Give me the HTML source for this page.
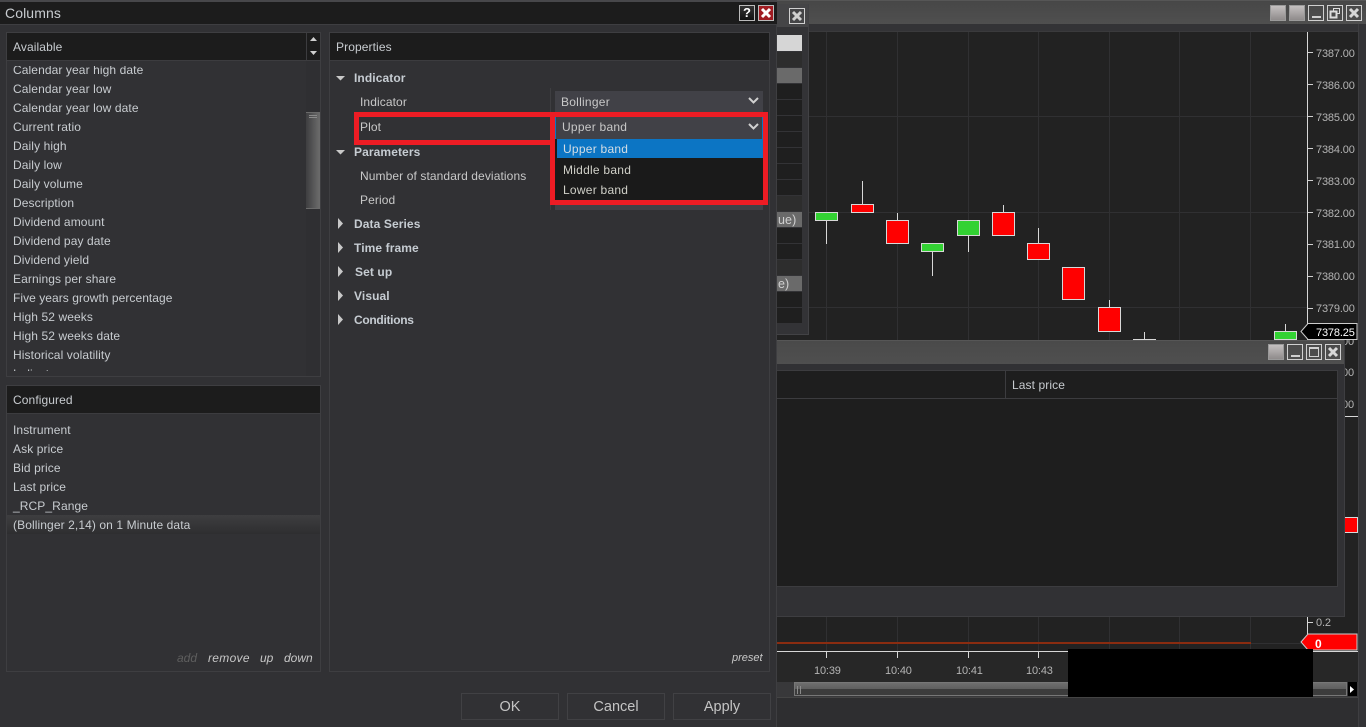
<!DOCTYPE html>
<html><head><meta charset="utf-8"><title>Columns</title>
<style>
html,body{margin:0;padding:0;background:#2e2e30}
#p{position:relative;width:1366px;height:727px;overflow:hidden;background:#2e2e30;font:12px "Liberation Sans",sans-serif;color:#c8c8c8}
#p div,#p svg{position:absolute}
.t{white-space:nowrap;line-height:16px;letter-spacing:.1px}
.b{font-weight:bold;color:#c6ccd2}
.h{background:#1c1c1c;border-bottom:1px solid #3c3c3f}
.pn{background:#313134;border:1px solid #3e3e41;box-sizing:border-box}
.gv{width:1px;background:#303032}
.gh{height:1px;background:#303032}
.c{box-sizing:border-box;border:1px solid #d8d8d8}
.w{width:1px;background:#d8d8d8}
.r{background:#f00}.n{background:#33d233}
.a{color:#b4b4b4;line-height:14px;white-space:nowrap;font-size:11px;letter-spacing:-.15px}
.k{height:1px;width:5px;background:#d0d0d0;left:1308px}
.row{left:777px;width:25px;height:15px;background:#1f1f1f;box-sizing:border-box}
.bt{box-sizing:border-box;width:16px;height:16px;border:1px solid #d0d0d0}
.gb{box-sizing:border-box;width:16px;height:16px;background:linear-gradient(#c4c0c0,#8f8b8b);border:1px solid #9a9a9a}
.btn{box-sizing:border-box;height:27px;width:98px;border:1px solid #414144;text-align:center;line-height:27px;font-size:14.5px;color:#c4c4c4;top:693px}
.i{font-style:italic;font-size:12px;line-height:14px}
.s{letter-spacing:.25px}
</style></head><body><div id="p">

<!-- background chart window -->
<div style="left:777px;top:0;width:589px;height:24px;background:linear-gradient(#474747,#4f4f4f);border-top:1px solid #565656;box-sizing:border-box"></div>
<div style="left:777px;top:24px;width:589px;height:7px;background:#333336"></div>
<div style="left:777px;top:31px;width:581px;height:620px;background:#222;border-top:1px solid #3a3a3c;box-sizing:border-box"></div>
<div style="left:777px;top:652px;width:581px;height:30px;background:#272727"></div>
<div style="left:1358px;top:24px;width:8px;height:703px;background:#333336;border-left:1px solid #3e3e41;box-sizing:border-box"></div>

<div class="gb" style="left:1270px;top:5px"></div><div class="gb" style="left:1289px;top:5px"></div>
<div class="bt" style="left:1308px;top:5px"><div style="left:3px;top:10px;width:9px;height:2px;background:#d0d0d0"></div></div>
<div class="bt" style="left:1327px;top:5px"><svg width="14" height="14" style="left:0;top:0"><rect x="5.500" y="2.500" width="6" height="5" fill="none" stroke="#ddd"/><rect x="2.500" y="5.500" width="6" height="6" fill="#4c4c4c" stroke="#ddd" stroke-width="2"/></svg></div>
<div class="bt" style="left:1346px;top:5px"><svg width="14" height="14" style="left:0;top:0"><path d="M3 3L11 11M11 3L3 11" stroke="#d8d8d8" stroke-width="3"/></svg></div>

<!-- grid -->
<div class="gv" style="left:826px;top:32px;height:619px"></div>
<div class="gv" style="left:897px;top:32px;height:619px"></div>
<div class="gv" style="left:968px;top:32px;height:619px"></div>
<div class="gv" style="left:1038px;top:32px;height:619px"></div>
<div class="gv" style="left:1109px;top:32px;height:619px"></div>
<div class="gv" style="left:1179px;top:32px;height:619px"></div>
<div class="gv" style="left:1250px;top:32px;height:619px"></div>
<div class="gh" style="left:809px;top:116px;width:498px"></div>
<div class="gh" style="left:809px;top:212px;width:498px"></div>
<div class="gh" style="left:809px;top:307px;width:498px"></div>

<!-- small window behind -->
<div style="left:777px;top:4px;width:32px;height:331px;background:#333336;border-right:1px solid #424245;border-bottom:1px solid #424245;box-sizing:border-box"></div>
<div style="left:777px;top:4px;width:31px;height:23px;background:#454547"></div>
<div class="bt" style="left:789px;top:8px"><svg width="14" height="14" style="left:0;top:0"><path d="M3 3L11 11M11 3L3 11" stroke="#d0d0d0" stroke-width="3"/></svg></div>
<div class="row" style="top:35px;height:16px;background:#d6d6d6"></div>
<div class="row" style="top:52px;background:#2d2d2d"></div>
<div class="row" style="top:68px;background:#6a6a6a"></div>
<div class="row" style="top:84px"></div><div class="row" style="top:100px"></div><div class="row" style="top:116px"></div><div class="row" style="top:132px"></div><div class="row" style="top:148px"></div><div class="row" style="top:164px"></div><div class="row" style="top:180px"></div>
<div class="row" style="top:196px;background:#2d2d2d"></div>
<div class="row" style="top:212px;background:#6a6a6a"></div>
<div class="row" style="top:228px"></div><div class="row" style="top:244px"></div>
<div class="row" style="top:260px;background:#2d2d2d"></div>
<div class="row" style="top:276px;background:#6a6a6a"></div>
<div class="row" style="top:292px"></div><div class="row" style="top:308px"></div>
<div class="t" style="left:778px;top:212px;color:#d0d0d0;font-size:12.500px">ue)</div>
<div class="t" style="left:778px;top:276px;color:#d0d0d0;font-size:12.500px">e)</div>

<!-- axis -->
<div style="left:1307px;top:32px;width:1px;height:310px;background:#d8d8d8"></div>
<div class="k" style="top:52px"></div><div class="k" style="top:84px"></div><div class="k" style="top:116px"></div><div class="k" style="top:148px"></div><div class="k" style="top:180px"></div><div class="k" style="top:212px"></div><div class="k" style="top:244px"></div><div class="k" style="top:276px"></div><div class="k" style="top:308px"></div>
<div class="a" style="left:1316px;top:47px">7387.00</div>
<div class="a" style="left:1316px;top:79px">7386.00</div>
<div class="a" style="left:1316px;top:111px">7385.00</div>
<div class="a" style="left:1316px;top:143px">7384.00</div>
<div class="a" style="left:1316px;top:175px">7383.00</div>
<div class="a" style="left:1316px;top:207px">7382.00</div>
<div class="a" style="left:1316px;top:238px">7381.00</div>
<div class="a" style="left:1316px;top:270px">7380.00</div>
<div class="a" style="left:1316px;top:302px">7379.00</div>
<div class="a" style="left:1342px;top:335px">00</div>
<div class="a" style="left:1342px;top:366px">00</div>
<div class="a" style="left:1342px;top:398px">00</div>
<div style="left:1345px;top:416px;width:13px;height:1px;background:#d8d8d8"></div>

<!-- candles -->
<div class="w" style="left:826px;top:220px;height:24px"></div><div class="c n" style="left:815px;top:212px;width:23px;height:9px"></div>
<div class="w" style="left:862px;top:181px;height:24px"></div><div class="c r" style="left:851px;top:204px;width:23px;height:9px"></div>
<div class="w" style="left:897px;top:213px;height:8px"></div><div class="c r" style="left:886px;top:220px;width:23px;height:24px"></div>
<div class="w" style="left:932px;top:251px;height:25px"></div><div class="c n" style="left:921px;top:243px;width:23px;height:9px"></div>
<div class="w" style="left:968px;top:235px;height:17px"></div><div class="c n" style="left:957px;top:220px;width:23px;height:16px"></div>
<div class="w" style="left:1003px;top:205px;height:8px"></div><div class="c r" style="left:992px;top:212px;width:23px;height:24px"></div>
<div class="w" style="left:1038px;top:228px;height:16px"></div><div class="c r" style="left:1027px;top:243px;width:23px;height:17px"></div>
<div class="c r" style="left:1062px;top:267px;width:23px;height:33px"></div>
<div class="w" style="left:1109px;top:300px;height:8px"></div><div class="c r" style="left:1098px;top:307px;width:23px;height:25px"></div>
<div class="w" style="left:1144px;top:332px;height:8px"></div><div style="left:1133px;top:339px;width:23px;height:1px;background:#d8d8d8"></div>
<div class="w" style="left:1285px;top:324px;height:8px"></div><div class="c n" style="left:1274px;top:331px;width:23px;height:9px"></div>

<!-- price tag -->
<svg width="60" height="18" style="left:1300px;top:323px"><path d="M1 8.500L8 .5H57V16.500H8Z" fill="#000" stroke="#ccc"/></svg>
<div style="left:1316px;top:326px;color:#fff;line-height:14px;font-size:11px;letter-spacing:-.15px">7378.25</div>

<!-- lower chart bits -->
<div class="c r" style="left:1335px;top:517px;width:23px;height:16px"></div>
<div style="left:1307px;top:617px;width:1px;height:17px;background:#d8d8d8"></div>
<div class="k" style="top:622px"></div>
<div class="a" style="left:1316px;top:616px">0.2</div>
<div style="left:777px;top:642px;width:474px;height:2px;background:#8a2c10"></div>
<div style="left:1251px;top:643px;width:50px;height:1px;background:#303032"></div>
<svg width="60" height="18" style="left:1300px;top:633px"><path d="M1 9L8 1H57V17H8Z" fill="#f00" stroke="#ccc"/></svg>
<div style="left:1315px;top:637px;color:#fff;font-weight:bold;line-height:14px">0</div>
<div style="left:777px;top:651px;width:581px;height:1px;background:#d8d8d8"></div>
<div class="w" style="left:826px;top:652px;height:6px"></div><div class="w" style="left:897px;top:652px;height:6px"></div><div class="w" style="left:968px;top:652px;height:6px"></div><div class="w" style="left:1038px;top:652px;height:6px"></div>
<div class="a" style="left:814px;top:664px">10:39</div>
<div class="a" style="left:885px;top:664px">10:40</div>
<div class="a" style="left:956px;top:664px">10:41</div>
<div class="a" style="left:1026px;top:664px">10:43</div>
<div style="left:777px;top:682px;width:581px;height:15px;background:#38383a;border-bottom:1px solid #444"></div>
<div style="left:794px;top:682px;width:553px;height:14px;box-sizing:border-box;border:1px solid #777;background:linear-gradient(#6e6e6e,#5e5e5e 50%,#3c3c3c 50%,#3c3c3c)"></div>
<div style="left:797px;top:686px;width:1px;height:8px;background:#8a8a8a"></div><div style="left:800px;top:686px;width:1px;height:8px;background:#8a8a8a"></div>
<div style="left:1348px;top:682px;width:9px;height:14px;background:#000"></div>
<svg width="5" height="7" style="left:1350px;top:686px"><path d="M0 0L4 3.500L0 7Z" fill="#fff"/></svg>
<div style="left:1068px;top:649px;width:245px;height:48px;background:#000"></div>

<!-- bottom window -->
<div style="left:777px;top:340px;width:568px;height:277px;background:#313134;border-right:1px solid #3e3e41;border-bottom:1px solid #3e3e41;box-sizing:border-box"></div>
<div style="left:777px;top:340px;width:567px;height:24px;background:linear-gradient(#4a4a4a,#4f4f4f);border-top:1px solid #565656;box-sizing:border-box"></div>
<div class="gb" style="left:1268px;top:344px"></div>
<div class="bt" style="left:1287px;top:344px"><div style="left:3px;top:10px;width:9px;height:2px;background:#d0d0d0"></div></div>
<div class="bt" style="left:1306px;top:344px"><div style="left:2px;top:2px;width:10px;height:10px;box-sizing:border-box;border:1px solid #d0d0d0;border-top-width:2px"></div></div>
<div class="bt" style="left:1325px;top:344px"><svg width="14" height="14" style="left:0;top:0"><path d="M3 3L11 11M11 3L3 11" stroke="#d8d8d8" stroke-width="3"/></svg></div>
<div style="left:777px;top:370px;width:561px;height:217px;background:#1e1e1e;border:1px solid #3c3c3f;border-left:0;box-sizing:border-box"></div>
<div style="left:777px;top:398px;width:560px;height:1px;background:#3c3c3f"></div>
<div style="left:1005px;top:371px;width:1px;height:27px;background:#3c3c3f"></div>
<div class="t" style="left:1012px;top:377px;color:#c8ccd0">Last price</div>

<!-- dialog -->
<div style="left:0;top:0;width:777px;height:727px;background:#313134;border-right:1px solid #3e3e41;box-sizing:border-box"></div>
<div style="left:0;top:0;width:777px;height:2px;background:#47474a"></div>
<div style="left:0;top:2px;width:777px;height:22px;background:#1c1c1c;border-bottom:1px solid #3e3e41"></div>
<div class="t" style="left:5px;top:4px;font-size:14px;line-height:18px;color:#c8ccd0">Columns</div>
<div style="left:739px;top:5px;width:16px;height:16px;box-sizing:border-box;border:1px solid #bbb;background:linear-gradient(#333,#111);color:#fff;font-weight:bold;font-size:13px;line-height:14px;text-align:center">?</div>
<div style="left:758px;top:5px;width:16px;height:16px;box-sizing:border-box;border:1px solid #bbb;background:#a01c22"><svg width="14" height="14" style="left:0;top:0"><path d="M3 3L11 11M11 3L3 11" stroke="#fff" stroke-width="3"/></svg></div>

<!-- Available -->
<div class="pn" style="left:6px;top:32px;width:315px;height:345px"></div>
<div class="h" style="left:7px;top:33px;width:313px;height:27px"></div>
<div style="left:306px;top:33px;width:1px;height:27px;background:#3c3c3f"></div>
<svg width="10" height="22" style="left:308px;top:35px"><path d="M2 6L5.500 2L9 6Z M2 16L9 16L5.500 20Z" fill="#d0d0d0"/></svg>
<div class="t" style="left:13px;top:39px;color:#c8ccd0">Available</div>
<div style="left:306px;top:61px;width:14px;height:315px;background:#2f2f32"></div>
<div style="left:306px;top:112px;width:14px;height:97px;box-sizing:border-box;border:1px solid #6a6a6a;border-left:0;background:linear-gradient(90deg,#3e3e40,#6a6a6a)"></div>
<div style="left:309px;top:115px;width:8px;height:1px;background:#8a8a8a"></div><div style="left:309px;top:117px;width:8px;height:1px;background:#8a8a8a"></div>
<div id="l" style="left:7px;top:66px;width:299px;height:305px;overflow:hidden;color:#c8ccd0">
<div class="t" style="left:6px;top:-4px">Calendar year high date</div>
<div class="t" style="left:6px;top:15px">Calendar year low</div>
<div class="t" style="left:6px;top:34px">Calendar year low date</div>
<div class="t" style="left:6px;top:53px">Current ratio</div>
<div class="t" style="left:6px;top:72px">Daily high</div>
<div class="t" style="left:6px;top:91px">Daily low</div>
<div class="t" style="left:6px;top:110px">Daily volume</div>
<div class="t" style="left:6px;top:129px">Description</div>
<div class="t" style="left:6px;top:148px">Dividend amount</div>
<div class="t" style="left:6px;top:167px">Dividend pay date</div>
<div class="t" style="left:6px;top:186px">Dividend yield</div>
<div class="t" style="left:6px;top:205px">Earnings per share</div>
<div class="t" style="left:6px;top:224px;letter-spacing:.05px">Five years growth percentage</div>
<div class="t" style="left:6px;top:243px">High 52 weeks</div>
<div class="t" style="left:6px;top:262px">High 52 weeks date</div>
<div class="t" style="left:6px;top:281px">Historical volatility</div>
<div class="t" style="left:6px;top:300px">Indicator</div>
</div>

<!-- Configured -->
<div class="pn" style="left:6px;top:385px;width:315px;height:287px"></div>
<div class="h" style="left:7px;top:386px;width:313px;height:27px"></div>
<div class="t" style="left:13px;top:392px;color:#c8ccd0">Configured</div>
<div style="left:7px;top:515px;width:313px;height:19px;background:linear-gradient(#3e3e40,#2e2e30)"></div>
<div class="t" style="left:13px;top:422px;color:#c8ccd0">Instrument</div>
<div class="t" style="left:13px;top:441px;color:#c8ccd0">Ask price</div>
<div class="t" style="left:13px;top:460px;color:#c8ccd0">Bid price</div>
<div class="t" style="left:13px;top:479px;color:#c8ccd0">Last price</div>
<div class="t" style="left:13px;top:498px;color:#c8ccd0">_RCP_Range</div>
<div class="t" style="left:13px;top:517px;color:#c8ccd0">(Bollinger 2,14) on 1 Minute data</div>
<div class="i" style="left:177px;top:651px;color:#5e5e5e">add</div>
<div class="i" style="left:208px;top:651px;letter-spacing:.3px">remove</div>
<div class="i" style="left:260px;top:651px">up</div>
<div class="i" style="left:284px;top:651px">down</div>

<!-- Properties -->
<div class="pn" style="left:329px;top:32px;width:441px;height:640px"></div>
<div class="h" style="left:330px;top:33px;width:439px;height:27px"></div>
<div class="t" style="left:336px;top:39px;color:#c8ccd0">Properties</div>
<div class="i" style="left:732px;top:651px;font-size:11px">preset</div>

<svg width="12" height="260" style="left:335px;top:70px"><path d="M1 6H10L5.500 10.500Z M1 80H10L5.500 84.500Z M3 148L8 153.500L3 159Z M3 172L8 177.500L3 183Z M3 196L8 201.500L3 207Z M3 220L8 225.500L3 231Z M3 244L8 249.500L3 255Z" fill="#c8c8c8"/></svg>
<div class="t b" style="left:354px;top:70px">Indicator</div>
<div class="t b" style="left:354px;top:144px">Parameters</div>
<div class="t b" style="left:354px;top:216px">Data Series</div>
<div class="t b" style="left:354px;top:240px">Time frame</div>
<div class="t b" style="left:355px;top:264px">Set up</div>
<div class="t b" style="left:354px;top:288px">Visual</div>
<div class="t b" style="left:354px;top:312px;letter-spacing:-.3px">Conditions</div>
<div class="t" style="left:360px;top:94px">Indicator</div>
<div class="t" style="left:360px;top:119px">Plot</div>
<div class="t" style="left:360px;top:168px">Number of standard deviations</div>
<div class="t" style="left:360px;top:192px">Period</div>

<div style="left:550px;top:88px;width:1px;height:122px;background:#3e3e41"></div>
<div style="left:555px;top:91px;width:208px;height:21px;background:#414147"></div>
<div class="t s" style="left:561px;top:94px">Bollinger</div>
<svg width="12" height="8" style="left:748px;top:97px"><path d="M1 1L5.500 5.500L10 1" fill="none" stroke="#d0d0d0" stroke-width="2"/></svg>
<div style="left:555px;top:200px;width:208px;height:10px;background:#414147"></div>

<div style="left:555px;top:117px;width:208px;height:22px;background:#414147;border-left:1px solid #0c75c4;border-right:1px solid #0c75c4;box-sizing:border-box"></div>
<div class="t s" style="left:562px;top:119px">Upper band</div>
<svg width="12" height="8" style="left:748px;top:123px"><path d="M1 1L5.500 5.500L10 1" fill="none" stroke="#d0d0d0" stroke-width="2"/></svg>
<div style="left:555px;top:139px;width:208px;height:61px;background:#1a1a1a"></div>
<div style="left:557px;top:139px;width:206px;height:19px;background:#0c75c4"></div>
<div class="t s" style="left:563px;top:141px;color:#d4dde4">Upper band</div>
<div class="t s" style="left:563px;top:162px;color:#d0d0c8">Middle band</div>
<div class="t s" style="left:563px;top:182px;color:#d0d0c8">Lower band</div>

<!-- red highlight boxes -->
<div style="left:354px;top:112px;width:196px;height:33px;box-sizing:border-box;border:5px solid #ed1c24;border-right:0"></div>
<div style="left:549px;top:112px;width:6px;height:5px;background:#ed1c24"></div>
<div style="left:549px;top:140px;width:6px;height:5px;background:#ed1c24"></div>
<div style="left:550px;top:112px;width:218px;height:93px;box-sizing:border-box;border:5px solid #ed1c24"></div>

<!-- buttons -->
<div class="btn" style="left:461px">OK</div>
<div class="btn" style="left:567px">Cancel</div>
<div class="btn" style="left:673px">Apply</div>

</div></body></html>
